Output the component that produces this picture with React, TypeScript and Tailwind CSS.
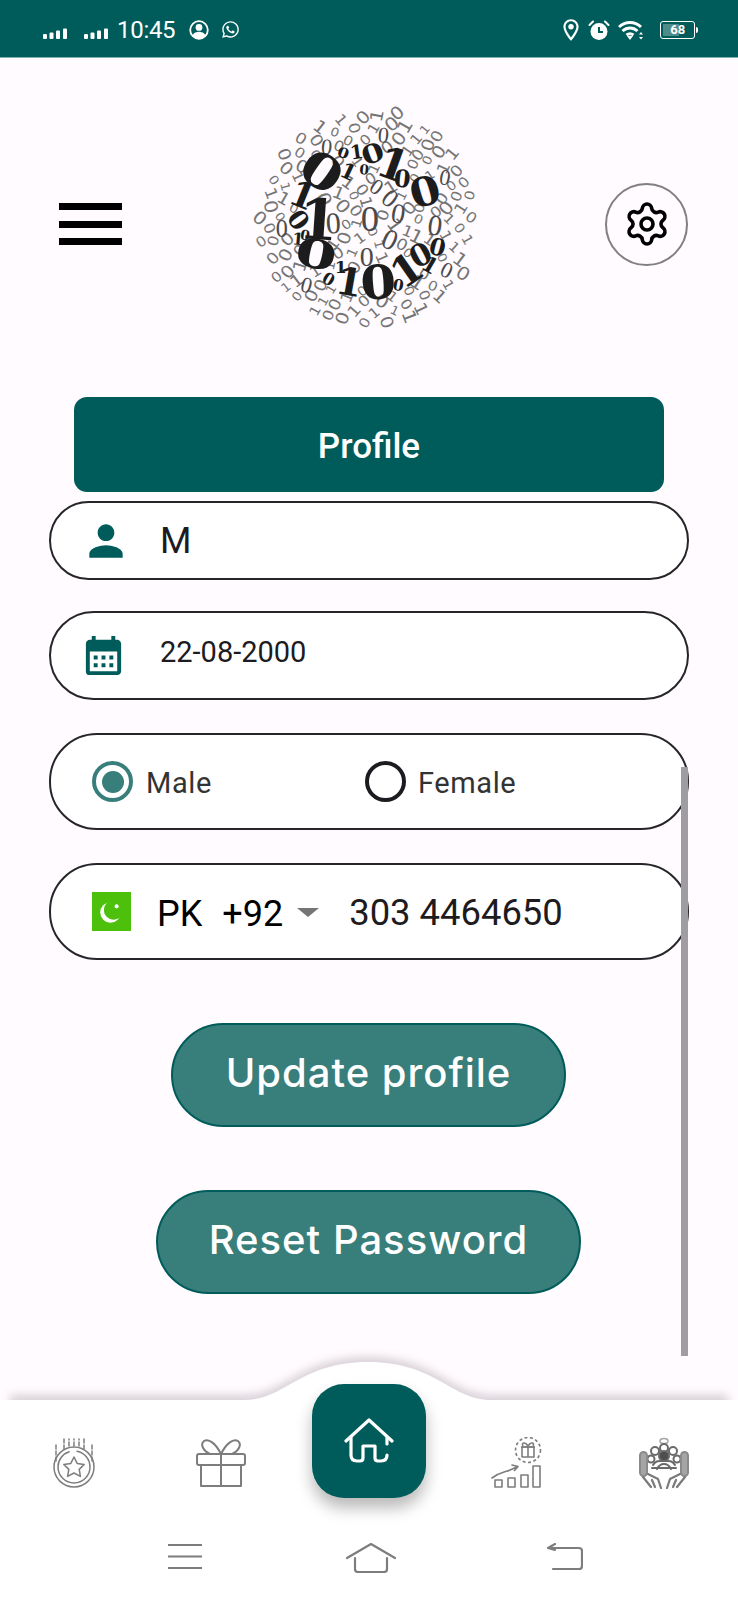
import React from 'react';
import { Settings } from 'lucide-react';
import { FaWhatsapp } from 'react-icons/fa';
import { MdCalendarMonth, MdOutlineLocationOn, MdPerson } from 'react-icons/md';

type Digit = { x: number; y: number; c: string; s: number; r: number; sx?: number };

// big dark digits of the logo, in 3x coordinates, s = height of the digit
const bigDigits: Digit[] = [
  { x: 275, y: 245, c: '0', s: 110, r: 35, sx: 1.25 },
  { x: 218, y: 315, c: '1', s: 82, r: 22 },
  { x: 265, y: 388, c: '1', s: 130, r: 4 },
  { x: 205, y: 390, c: '0', s: 60, r: 55 },
  { x: 258, y: 492, c: '0', s: 92, r: 12, sx: 1.5 },
  { x: 445, y: 578, c: '0', s: 108, r: -4, sx: 1.1 },
  { x: 358, y: 575, c: '1', s: 88, r: 10 },
  { x: 530, y: 540, c: '1', s: 96, r: -35 },
  { x: 572, y: 495, c: '0', s: 70, r: -28 },
  { x: 622, y: 472, c: '0', s: 54, r: 15 },
  { x: 585, y: 305, c: '0', s: 92, r: -16, sx: 1.1 },
  { x: 490, y: 222, c: '1', s: 100, r: 20 },
  { x: 517, y: 266, c: '0', s: 56, r: 6 },
  { x: 428, y: 190, c: '0', s: 60, r: -20, sx: 1.25 },
  { x: 380, y: 185, c: '1', s: 44, r: -8 },
  { x: 340, y: 190, c: '0', s: 32, r: 20, sx: 1.2 },
  { x: 403, y: 238, c: '0', s: 32, r: 5 },
  { x: 355, y: 245, c: '1', s: 50, r: 25 },
  { x: 295, y: 568, c: '0', s: 38, r: 30 },
  { x: 505, y: 585, c: '0', s: 36, r: 10 },
  { x: 225, y: 435, c: '0', s: 32, r: 10 },
  { x: 204, y: 448, c: '1', s: 38, r: 5 },
  { x: 332, y: 530, c: '1', s: 40, r: 0 },
  { x: 600, y: 525, c: '1', s: 50, r: 30 },
];

// thin mid-size ones in the middle of the ball
const midDigits: Digit[] = [
  { x: 420, y: 385, c: '0', s: 76, r: 0 },
  { x: 505, y: 370, c: '0', s: 58, r: 10 },
  { x: 480, y: 325, c: '0', s: 54, r: 40 },
  { x: 310, y: 398, c: '0', s: 62, r: -4 },
  { x: 410, y: 498, c: '0', s: 58, r: 0 },
  { x: 480, y: 448, c: '0', s: 60, r: 25 },
  { x: 615, y: 405, c: '0', s: 60, r: 8 },
  { x: 440, y: 290, c: '0', s: 46, r: 35 },
  { x: 645, y: 262, c: '0', s: 46, r: 10 },
  { x: 650, y: 540, c: '0', s: 46, r: 25 },
  { x: 230, y: 585, c: '0', s: 46, r: 15 },
  { x: 155, y: 415, c: '0', s: 50, r: 0 },
  { x: 290, y: 170, c: '0', s: 46, r: 5 },
  { x: 460, y: 135, c: '0', s: 46, r: 5 },
];

// pseudo random filler, fixed seed so the picture stays the same
function buildSmallDigits(): Digit[] {
  const out: Digit[] = [];
  const all = [...bigDigits, ...midDigits];
  let seed = 17;
  const rnd = () => {
    seed = (seed * 16807) % 2147483647;
    return seed / 2147483647;
  };
  for (let i = 0; i < 700; i++) {
    const a = i * 2.39996;
    const d = 330 * Math.sqrt((i + 0.5) / 700);
    const x = 415 + d * Math.cos(a);
    const y = 385 + d * Math.sin(a);
    const clear = all.every((g) => Math.hypot(g.x - x, g.y - y) > g.s * 0.4 + 10);
    if (!clear) continue;
    if (out.some((g) => Math.hypot(g.x - x, g.y - y) < 30)) continue;
    out.push({
      x,
      y,
      c: rnd() > 0.42 ? '0' : '1',
      s: 26 + rnd() * 14,
      r: Math.round(a * 57.3) % 180 > 90 ? -30 - rnd() * 50 : 20 + rnd() * 60,
      sx: 1.15,
    });
  }
  return out;
}

const smallDigits = buildSmallDigits();

function BinaryLogo() {
  const place = (g: Digit) =>
    `translate(${g.x} ${g.y}) rotate(${g.r}) scale(${g.sx ?? 1} 1)`;
  return (
    <svg width="280" height="260" viewBox="0 12 840 780" className="shrink-0">
      {smallDigits.map((g, i) => (
        <text
          key={i}
          transform={place(g)}
          fontSize={g.s * 1.37}
          textAnchor="middle"
          dominantBaseline="central"
          fill="#757575"
          fontFamily="'DejaVu Sans', sans-serif"
        >
          {g.c}
        </text>
      ))}
      {midDigits.map((g, i) => (
        <text
          key={i}
          transform={place(g)}
          fontSize={g.s * 1.45}
          textAnchor="middle"
          dominantBaseline="central"
          fill="#4a4a4a"
          fontFamily="'Liberation Serif', serif"
        >
          {g.c}
        </text>
      ))}
      {bigDigits.map((g, i) => (
        <text
          key={i}
          transform={place(g)}
          fontSize={g.s * 1.3}
          fontWeight="700"
          textAnchor="middle"
          dominantBaseline="central"
          fill="#1c1c1c"
          fontFamily="'DejaVu Serif', serif"
        >
          {g.c}
        </text>
      ))}
    </svg>
  );
}

function SignalBars() {
  return (
    <svg width="24" height="12" viewBox="0 0 24 12" fill="#fff" className="mt-[7px]">
      <rect x="0" y="7" width="4" height="5" rx="1" />
      <rect x="6.5" y="5.5" width="4" height="6.5" rx="1" />
      <rect x="13" y="3.5" width="4" height="8.5" rx="1" />
      <rect x="20" y="1.5" width="4" height="10.5" rx="1" />
    </svg>
  );
}

function AccountIcon() {
  return (
    <svg width="20" height="20" viewBox="0 0 20 20" fill="#fff" className="ml-[14px]">
      <circle cx="10" cy="10" r="8.8" fill="none" stroke="#fff" strokeWidth="1.8" />
      <circle cx="10" cy="7.4" r="3.4" />
      <path d="M3.6 15.4C5 12.6 7.4 11.8 10 11.8s5 .8 6.4 3.6C15 17.8 12.6 19 10 19s-5-1.2-6.4-3.6z" />
    </svg>
  );
}

function AlarmIcon() {
  return (
    <svg width="22" height="20" viewBox="0 0 22 20" className="ml-[4px]">
      <circle cx="11" cy="11.5" r="8.5" fill="#fff" />
      <path d="M11 7v5h4" fill="none" stroke="#005c5a" strokeWidth="2" />
      <path d="M1.5 5L5 1.5M20.5 5L17 1.5" stroke="#fff" strokeWidth="2" strokeLinecap="round" />
    </svg>
  );
}

function WifiIcon() {
  return (
    <svg width="26" height="20" viewBox="0 0 26 20" fill="none" stroke="#fff" strokeWidth="3" className="ml-[8px]">
      <path d="M1 7C7.5 1 16.5 1 23 7" />
      <path d="M4.5 11C9 7 15 7 19.5 11" />
      <path d="M8.5 15C10.500 13.500 13.500 13.500 15.500 15" />
      <path d="M12 20l-3-4h6z" fill="#fff" stroke="none" />
      <path d="M23 12l2 2.600h-4zM23 19.500l-2-2.600h4z" fill="#fff" stroke="none" />
    </svg>
  );
}

function StatusBar() {
  return (
    <div className="flex h-[58px] items-center border-b border-[#7fb3af] bg-[#005c5a] pl-[43px] pt-[2px] text-white">
      <SignalBars />
      <div className="ml-[17px]">
        <SignalBars />
      </div>
      <span className="ml-[9px] text-[24px] leading-none tracking-[-0.3px]">10:45</span>
      <AccountIcon />
      <FaWhatsapp className="ml-[12px] h-[19px] w-[19px]" />
      <MdOutlineLocationOn className="ml-[318px] h-[26px] w-[26px]" />
      <AlarmIcon />
      <WifiIcon />
      <div className="ml-[16px] flex items-center">
        <div className="flex h-[18px] w-[35px] items-center rounded-[3px] border-[1.5px] border-white p-[2px]">
          <div className="relative flex h-full w-full items-center justify-center text-[13px] font-bold leading-none">
            <div className="absolute inset-y-0 left-0 w-[55%] bg-[#4f8c89]" />
            <span className="relative">68</span>
          </div>
        </div>
        <div className="ml-[1px] h-[6px] w-[1.5px] rounded-r-sm bg-white" />
      </div>
    </div>
  );
}

function Header() {
  return (
    <div className="mt-[36px] flex h-[260px] items-center">
      <div className="ml-[59px] flex w-[63px] flex-col gap-[10.5px]">
        <div className="h-[7px] bg-black" />
        <div className="h-[7px] bg-black" />
        <div className="h-[7px] bg-black" />
      </div>
      <div className="ml-[108px]">
        <BinaryLogo />
      </div>
      <div className="ml-[95px] flex h-[83px] w-[83px] items-center justify-center rounded-full border-[2.5px] border-[#808080]">
        <Settings size={48} strokeWidth={1.8} color="#000" />
      </div>
    </div>
  );
}

function Field({ className, children }: { className: string; children: React.ReactNode }) {
  return (
    <div
      className={`ml-[49px] flex w-[640px] items-center rounded-[48px] border-2 border-[#26262a] bg-white ${className}`}
    >
      {children}
    </div>
  );
}

function Radio({ checked }: { checked?: boolean }) {
  return checked ? (
    <div className="flex h-[41px] w-[41px] items-center justify-center rounded-full border-[4px] border-[#387e7a]">
      <div className="h-[22px] w-[22px] rounded-full bg-[#387e7a]" />
    </div>
  ) : (
    <div className="h-[41px] w-[41px] rounded-full border-[4px] border-[#1d1b20]" />
  );
}

function ProfileForm() {
  return (
    <div className="flex flex-col">
      <div className="mx-[74px] mt-[43px] flex h-[95px] w-[590px] items-center justify-center rounded-[13px] bg-[#005c5a] pt-[6px] text-[35px] font-medium text-white">
        Profile
      </div>

      <Field className="mt-[9px] h-[79px] pl-[30px]">
        <MdPerson className="h-[50px] w-[50px] text-[#005c5a]" />
        <span className="ml-[29px] text-[36px] text-[#1d1b20]">M</span>
      </Field>

      <Field className="mt-[31px] h-[89px] pl-[29px]">
        <MdCalendarMonth className="h-[47px] w-[47px] text-[#005c5a]" />
        <span className="relative -top-[3px] ml-[33px] text-[29px] text-[#1d1b20]">22-08-2000</span>
      </Field>

      <Field className="mt-[33px] h-[97px] pl-[41px]">
        <Radio checked />
        <span className="relative top-[2px] ml-[13px] text-[29px] tracking-[0.6px] text-[#333]">Male</span>
        <div className="ml-[153px]">
          <Radio />
        </div>
        <span className="relative top-[2px] ml-[12px] text-[29px] tracking-[0.6px] text-[#333]">Female</span>
      </Field>

      <Field className="mt-[33px] h-[97px] pl-[41px]">
        <svg width="39" height="39" viewBox="0 0 38 38" className="shrink-0">
          <rect width="38" height="38" fill="#4cc00a" />
          <circle cx="18" cy="20" r="10" fill="#fff" />
          <circle cx="21" cy="17.5" r="9.5" fill="#4cc00a" />
          <circle cx="24" cy="14" r="2" fill="#fff" />
        </svg>
        <span className="relative top-[2px] ml-[26px] text-[36px] text-black">PK</span>
        <span className="relative top-[2px] ml-[20px] text-[36px] text-black">+92</span>
        <div className="ml-[14px] mt-[2px] h-0 w-0 border-x-[11px] border-t-[9px] border-x-transparent border-t-[#757575]" />
        <span className="relative top-[2px] ml-[30px] text-[36.4px] text-[#1d1b20]">303 4464650</span>
      </Field>

      <button className="ml-[171px] mt-[63px] h-[104px] w-[395px] rounded-[52px] border-2 border-[#005c5a] bg-[#387e7a] pb-[4px] font-['Inter',sans-serif] text-[40px] font-medium tracking-[1px] text-white">
        Update profile
      </button>
      <button className="ml-[156px] mt-[63px] h-[104px] w-[425px] rounded-[52px] border-2 border-[#005c5a] bg-[#387e7a] pb-[4px] font-['Inter',sans-serif] text-[40px] font-medium tracking-[1px] text-white">
        Reset Password
      </button>
    </div>
  );
}

function CoinIcon() {
  return (
    <svg width="44" height="52" viewBox="0 0 44 52" fill="none" stroke="#7d7d7d" strokeWidth="1.5" strokeLinecap="round" strokeLinejoin="round">
      <circle cx="22" cy="30" r="20" />
      <circle cx="22" cy="30" r="16" strokeDasharray="70 8" />
      <path d="M22 20l3.2 6.4 7 1-5 5 1.2 7-6.4-3.4-6.4 3.4 1.2-7-5-5 7-1z" />
      <path d="M4 24V8M40 24V8M12 12V2M17 9V2M22 9V2M27 9V2M32 12V2" strokeDasharray="4 2" />
    </svg>
  );
}

function GiftIcon() {
  return (
    <svg width="50" height="50" viewBox="0 0 50 50" fill="none" stroke="#7d7d7d" strokeWidth="2" strokeLinecap="round" strokeLinejoin="round">
      <rect x="1" y="16" width="48" height="11" rx="2" />
      <path d="M5 27v21h40V27M25 16v32" />
      <path d="M25 16C20 6 13 0 8 3c-4 3-1 10 6 13M25 16c5-10 12-16 17-13 4 3 1 10-6 13" />
    </svg>
  );
}

function GrowthIcon() {
  return (
    <svg width="52" height="52" viewBox="0 0 52 52" fill="none" stroke="#7d7d7d" strokeWidth="1.6" strokeLinejoin="round">
      <circle cx="37" cy="13" r="12.5" strokeDasharray="3 2.5" />
      <rect x="31" y="10" width="12" height="10" />
      <path d="M37 10v10M30 10h14M37 9c-3-5-7-3-5 0M37 9c3-5 7-3 5 0" />
      <path d="M1 41c8-6 14-6 18-8l7-3M21 28l6 1.5-3.5 4" strokeLinecap="round" />
      <rect x="4" y="43" width="7" height="7" />
      <rect x="17" y="41" width="7" height="9" />
      <rect x="30" y="38" width="7" height="12" />
      <rect x="42" y="29" width="7" height="21" />
    </svg>
  );
}

function HandsIcon() {
  return (
    <svg width="50" height="52" viewBox="0 0 50 52" fill="none" stroke="#6a6a6a" strokeWidth="2" strokeLinecap="round" strokeLinejoin="round">
      <ellipse cx="25" cy="4" rx="4" ry="2.5" stroke="#a5a5a5" strokeWidth="1.5" />
      <circle cx="25" cy="11" r="4" />
      <circle cx="16" cy="14" r="4" />
      <circle cx="34" cy="14" r="4" />
      <circle cx="12" cy="22" r="3.5" />
      <circle cx="38" cy="22" r="3.5" />
      <circle cx="25" cy="19" r="5" fill="#4e4e4e" />
      <path d="M14 28c3-5 7-4 11-4s8-1 11 4M18 32c2-4 5-5 7-5s5 1 7 5M13 31h24" />
      <rect x="1" y="15" width="7" height="24" rx="3.5" fill="#a5a5a5" stroke="#8a8a8a" />
      <rect x="42" y="15" width="7" height="24" rx="3.5" fill="#a5a5a5" stroke="#8a8a8a" />
      <path d="M9 37l10 5 3 9M41 37l-10 5-3 9M4 40l8 10M46 40l-8 10M13 43l3 7M37 43l-3 7" strokeWidth="2.2" stroke="#7a7a7a" />
    </svg>
  );
}

function BottomNav() {
  return (
    <div className="relative">
      {/* white bar with the bump over the home button */}
      <svg
        width="738"
        height="62"
        viewBox="0 0 738 62"
        className="absolute -top-[42px] left-0 drop-shadow-[0_-5px_5px_rgba(60,40,60,0.2)]"
      >
        <path
          d="M10 42H245C285 42 300 4 368 4C436 4 451 42 491 42H728V62H10Z"
          fill="#fff"
        />
      </svg>
      <div className="relative grid h-[113px] grid-cols-5 bg-white">
        <div className="flex justify-center pt-[37px]">
          <CoinIcon />
        </div>
        <div className="flex justify-center pt-[38px]">
          <GiftIcon />
        </div>
        <div className="flex justify-center">
          <div className="-mt-[16px] flex h-[114px] w-[114px] shrink-0 items-center justify-center rounded-[32px] bg-[#005c5a] shadow-[0_10px_16px_rgba(0,0,0,0.28)]">
            <svg width="50" height="46" viewBox="0 0 50 46" fill="none" stroke="#fff" strokeWidth="3.2" strokeLinecap="round" strokeLinejoin="round">
              <path d="M2 23L25 2l23 21" />
              <path d="M7 19v18c0 4 2 6 6 6h3c2 0 3-1 3-3V28h12v12c0 2 1 3 3 3h3c4 0 6-2 6-6" />
              <path d="M43 19v7" />
            </svg>
          </div>
        </div>
        <div className="flex justify-center pt-[37px]">
          <GrowthIcon />
        </div>
        <div className="flex justify-center pt-[37px]">
          <HandsIcon />
        </div>
      </div>
      <div className="flex h-[87px] items-start bg-white pl-[168px] pt-[30px] text-[#7d7d7d]">
        <svg width="35" height="27" viewBox="0 0 35 27" fill="none" stroke="currentColor" strokeWidth="2.2">
          <path d="M0 2h34M0 13.5h34M0 25h34" />
        </svg>
        <svg width="50" height="30" viewBox="0 0 50 30" fill="none" stroke="currentColor" strokeWidth="2.2" strokeLinecap="round" strokeLinejoin="round" className="ml-[143px]">
          <path d="M1 15L25 1l24 14M9 15v11c0 2 1 3 3 3h26c2 0 3-1 3-3V15" />
        </svg>
        <svg width="36" height="28" viewBox="0 0 36 28" fill="none" stroke="currentColor" strokeWidth="2.2" strokeLinecap="round" strokeLinejoin="round" className="ml-[151px]">
          <path d="M2 5h30c2 0 3 1 3 3v15c0 2-1 3-3 3H6M8 1L1 5l7 2" />
        </svg>
      </div>
    </div>
  );
}

export default function App() {
  return (
    <div className="relative flex h-[1600px] w-[738px] flex-col overflow-hidden bg-[#fffbfe] font-['Roboto',sans-serif]">
      <StatusBar />
      <Header />
      <ProfileForm />
      <div className="flex-1" />
      <BottomNav />
      {/* scrollbar sits over the fields */}
      <div className="absolute left-[681px] top-[767px] h-[589px] w-[7px] bg-[#a09ca4]" />
    </div>
  );
}
